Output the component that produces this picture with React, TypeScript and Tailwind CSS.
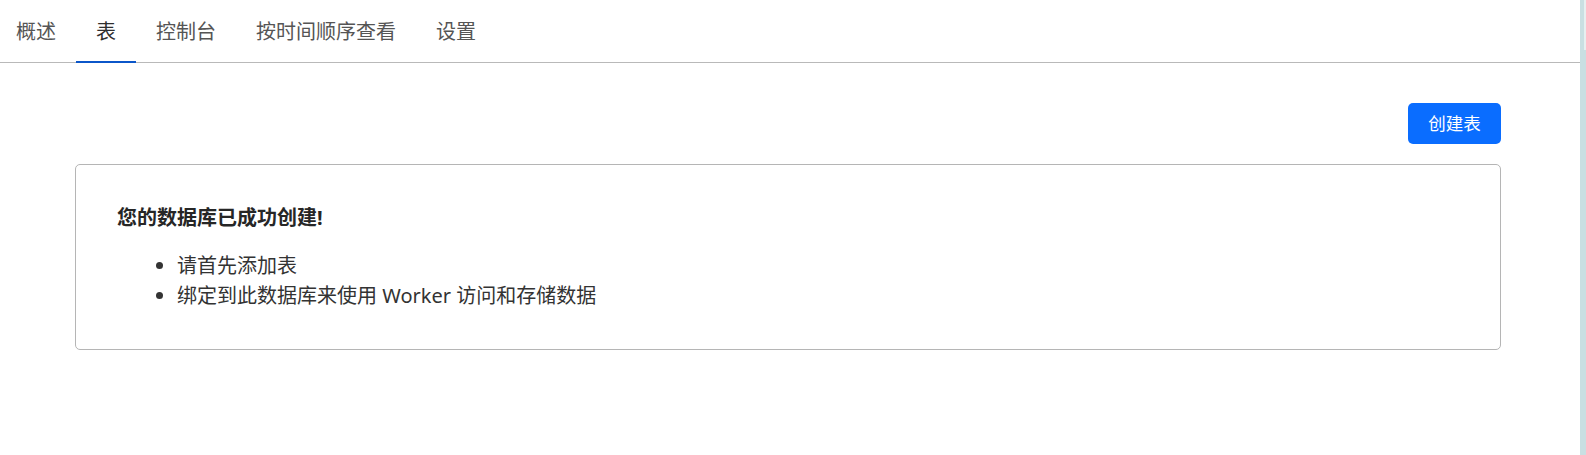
import type { ReactNode } from "react";

const tabs = ["概述", "表", "控制台", "按时间顺序查看", "设置"];
const activeTab = "表";

function Tab({ label, first }: { label: string; first: boolean }) {
  const active = label === activeTab;
  return (
    <div
      className={
        "relative flex h-full items-center text-[20px] leading-[30px] " +
        (first ? "pl-4 pr-5 " : "px-5 ") +
        (active ? "text-[#2e2e2e]" : "text-[#555555]")
      }
    >
      <span className="pt-[2px]">{label}</span>
      {active ? <span className="absolute bottom-[-1px] left-0 right-0 h-[2px] bg-[#0b56c9]" /> : null}
    </div>
  );
}

function Bullet({ children }: { children: ReactNode }) {
  return <li>{children}</li>;
}

export default function App() {
  return (
    <div
      className="flex h-[455px] w-full bg-white"
      style={{ fontFamily: '"Noto Sans", "Noto Sans CJK SC", sans-serif' }}
    >
      <div className="flex-1">
        <nav className="flex h-[63px] border-b border-[#b9b9b9]">
          {tabs.map((t, i) => (
            <Tab key={t} label={t} first={i === 0} />
          ))}
        </nav>

        <div className="ml-[75px] w-[1426px]">
          <div className="flex justify-end pt-[40px]">
            <button className="h-[41px] w-[93px] rounded-[5px] bg-[#0a6dff] text-[17.5px] text-white">
              创建表
            </button>
          </div>

          <div className="mt-[20px] rounded-[5px] border border-[#b5b5b5] px-[41px] pt-[40px] pb-[38px]">
            <h3 className="text-[20px] font-bold leading-[25px] text-[#262626]">您的数据库已成功创建!</h3>
            <ul className="mt-[21px] list-disc pl-[60px] text-[20px] leading-[30px] text-[#333333]">
              <Bullet>请首先添加表</Bullet>
              <Bullet>绑定到此数据库来使用 Worker 访问和存储数据</Bullet>
            </ul>
          </div>
        </div>
      </div>

      <div className="flex w-[6px] bg-[#c9dfe2]">
        <div className="ml-[4px] h-[50px] w-[2px] bg-[#e6eff0]" />
      </div>
    </div>
  );
}
